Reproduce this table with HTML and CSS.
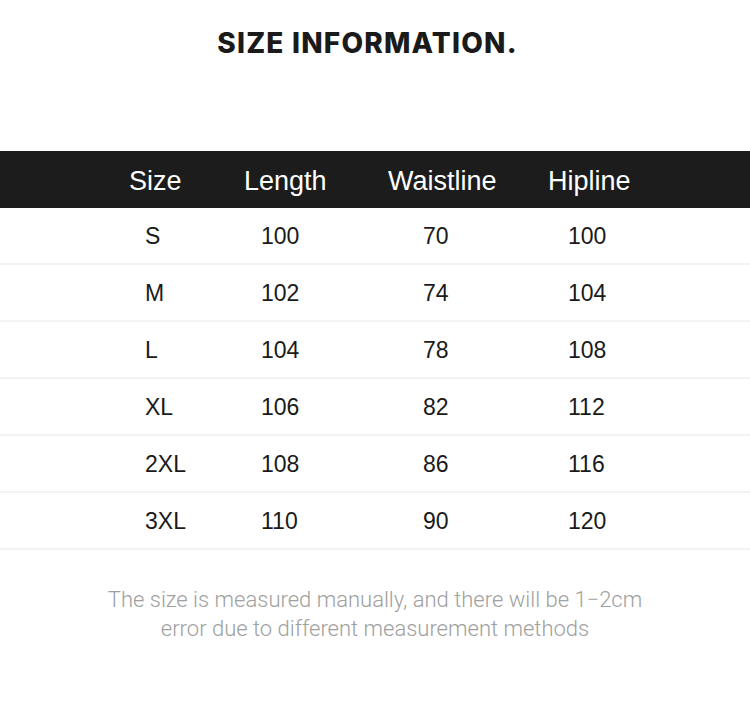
FILE: index.html
```html
<!DOCTYPE html>
<html>
<head>
<meta charset="utf-8">
<link rel="stylesheet" href="styles.css">
</head>
<body>
<div class="page">
  <h1 class="title">SIZE INFORMATION.</h1>
  <div class="table">
    <div class="row head">
      <div class="cell c1">Size</div>
      <div class="cell c2">Length</div>
      <div class="cell c3">Waistline</div>
      <div class="cell c4">Hipline</div>
    </div>
    <div class="row"><div class="cell c1">S</div><div class="cell c2">100</div><div class="cell c3">70</div><div class="cell c4">100</div></div>
    <div class="row"><div class="cell c1">M</div><div class="cell c2">102</div><div class="cell c3">74</div><div class="cell c4">104</div></div>
    <div class="row"><div class="cell c1">L</div><div class="cell c2">104</div><div class="cell c3">78</div><div class="cell c4">108</div></div>
    <div class="row"><div class="cell c1">XL</div><div class="cell c2">106</div><div class="cell c3">82</div><div class="cell c4">112</div></div>
    <div class="row"><div class="cell c1">2XL</div><div class="cell c2">108</div><div class="cell c3">86</div><div class="cell c4">116</div></div>
    <div class="row"><div class="cell c1">3XL</div><div class="cell c2">110</div><div class="cell c3">90</div><div class="cell c4">120</div></div>
  </div>
  <p class="note">The size is measured manually, and there will be 1−2cm<br>error due to different measurement methods</p>
</div>
</body>
</html>
```

FILE: styles.css
```css
* { box-sizing: border-box; }
html, body { margin: 0; padding: 0; background: #fff; }
.page {
  width: 750px;
  height: 721px;
  overflow: hidden;
  display: flex;
  flex-direction: column;
}
.title {
  margin: 0;
  padding-top: 26px;
  padding-right: 15px;
  height: 151px;
  text-align: center;
  font-family: Inter, "Liberation Sans", sans-serif;
  font-weight: 800;
  font-size: 28px;
  line-height: 34px;
  color: #1a1a1a;
  letter-spacing: 1.2px;
}
.table { display: flex; flex-direction: column; }
.row {
  display: grid;
  grid-template-columns: 244px 144px 160px 1fr;
  height: 57px;
  padding-top: 2px;
  align-items: center;
  border-bottom: 2px solid #f3f3f3;
  font-family: "Liberation Sans", Arial, sans-serif;
  font-size: 23px;
  color: #1a1a1a;
}
.cell.c1 { padding-left: 145px; }
.cell.c2 { padding-left: 17px; }
.cell.c3 { padding-left: 35px; }
.cell.c4 { padding-left: 20px; }
.row.head {
  background: #1c1c1c;
  color: #fff;
  border-bottom: none;
  font-size: 27px;
  padding-top: 3px;
}
.row.head .cell.c1 { padding-left: 129px; }
.row.head .cell.c2,
.row.head .cell.c3,
.row.head .cell.c4 { padding-left: 0; }
.note {
  margin: 0;
  padding-top: 35px;
  text-align: center;
  font-family: Roboto, "Liberation Sans", sans-serif;
  font-weight: 300;
  font-size: 22px;
  line-height: 29px;
  color: #a0a0a0;
}
```
